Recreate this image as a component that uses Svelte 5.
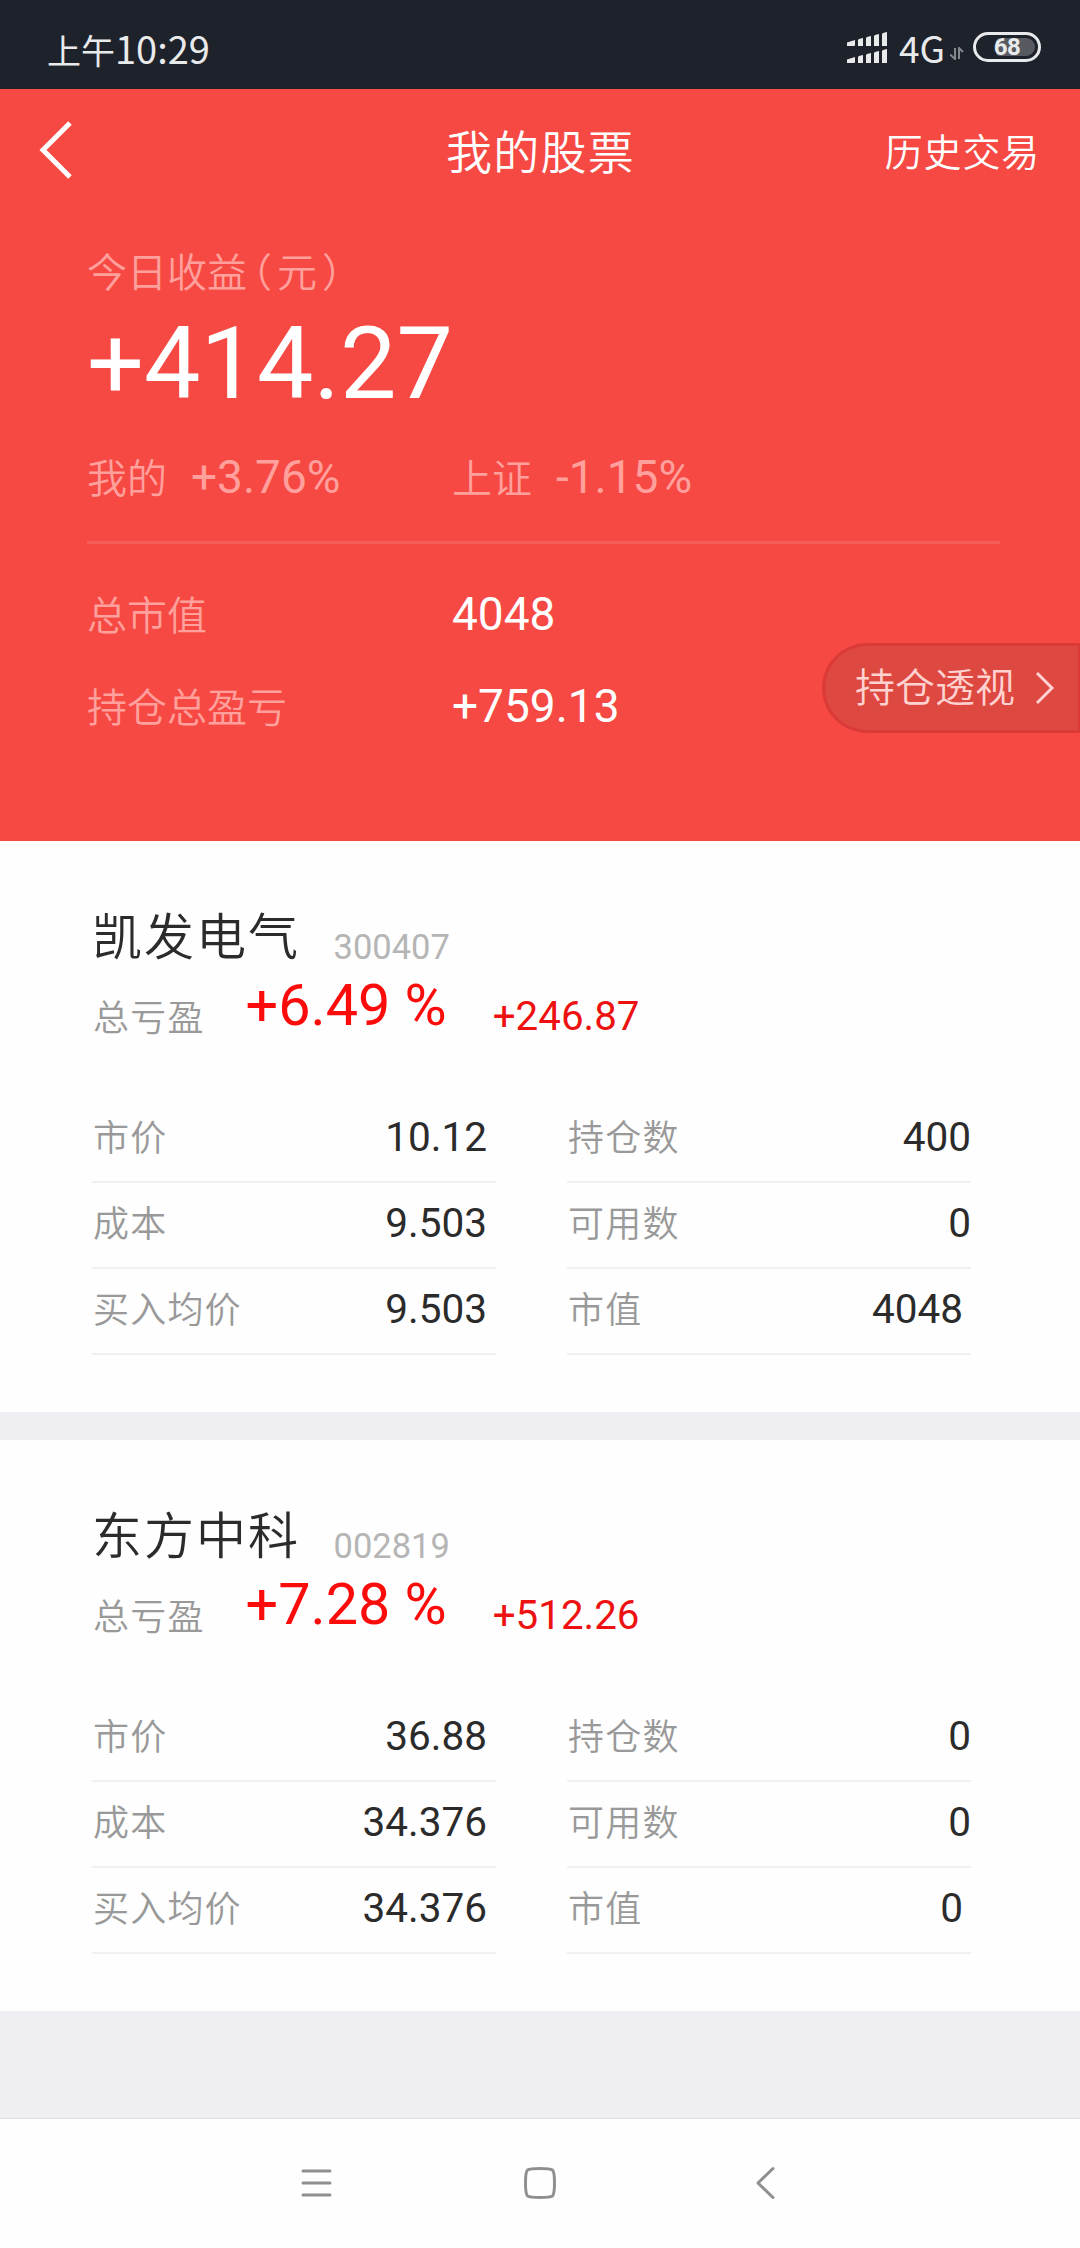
<script lang="ts">
    interface Field {
        label: string;
        value: string;
        inset?: boolean;
    }

    interface Stock {
        name: string;
        code: string;
        percent: string;
        profit: string;
        left: Field[];
        right: Field[];
    }

    const stocks: Stock[] = [
        {
            name: "凯发电气",
            code: "300407",
            percent: "+6.49 %",
            profit: "+246.87",
            left: [
                { label: "市价", value: "10.12" },
                { label: "成本", value: "9.503" },
                { label: "买入均价", value: "9.503" },
            ],
            right: [
                { label: "持仓数", value: "400" },
                { label: "可用数", value: "0" },
                { label: "市值", value: "4048", inset: true },
            ],
        },
        {
            name: "东方中科",
            code: "002819",
            percent: "+7.28 %",
            profit: "+512.26",
            left: [
                { label: "市价", value: "36.88" },
                { label: "成本", value: "34.376" },
                { label: "买入均价", value: "34.376" },
            ],
            right: [
                { label: "持仓数", value: "0" },
                { label: "可用数", value: "0" },
                { label: "市值", value: "0", inset: true },
            ],
        },
    ];
</script>

<div class="screen">
    <div class="status-bar">
        <div class="clock"><span class="period">上午</span>10:29</div>
        <div class="status-icons">
            <svg class="signal" viewBox="0 0 42 32" width="42" height="32">
                <path
                    d="M1 11.5L9 9v5q0 1-1 1H1zM12 9q0-1 5-2v8h-5zM20 7q0-1 5-2v10h-5zM28 5q0-1 5-2v12h-5zM36 3q0-1 5-2v14h-5zM1 28.500L9 26v5q0 1-1 1H1zM12 26q0-1 5-2v8h-5zM20 24q0-1 5-2v10h-5zM28 22q0-1 5-2v12h-5zM36 20q0-1 5-2v14h-5z"
                />
            </svg>
            <span class="network">4G</span>
            <svg class="data" viewBox="0 0 14 13" width="14" height="13">
                <path d="M5 1v11L0 7.500M9 12V1l4 4" />
            </svg>
            <div class="battery">
                <div class="level"></div>
                <span>68</span>
            </div>
        </div>
    </div>

    <section class="hero">
        <header class="title-bar">
            <button class="back" aria-label="返回">
                <svg viewBox="0 0 36 60" width="36" height="60">
                    <path d="M32 3L5 30l27 27" />
                </svg>
            </button>
            <h1>我的股票</h1>
            <button class="history">历史交易</button>
        </header>

        <div class="hero-body">
            <div class="muted">
                今日收益<span class="paren open">（</span>元<span
                    class="paren close">）</span
                >
            </div>
            <div class="amount">+414.27</div>
            <div class="indices">
                <div class="index">
                    <span class="muted">我的</span>
                    <span class="rate">+3.76%</span>
                </div>
                <div class="index">
                    <span class="muted">上证</span>
                    <span class="rate">-1.15%</span>
                </div>
            </div>
            <div class="totals">
                <div class="total-list">
                    <span class="muted">总市值</span>
                    <span class="total">4048</span>
                    <span class="muted">持仓总盈亏</span>
                    <span class="total">+759.13</span>
                </div>
                <button class="insight">
                    <span>持仓透视</span>
                    <svg viewBox="0 0 20 34" width="20" height="34">
                        <path d="M2 2l15 15L2 32" />
                    </svg>
                </button>
            </div>
        </div>
    </section>

    <main>
        {#each stocks as stock}
            <article class="card">
                <div class="heading">
                    <h2>{stock.name}</h2>
                    <span class="code">{stock.code}</span>
                </div>
                <div class="summary">
                    <span class="label">总亏盈</span>
                    <span class="percent">{stock.percent}</span>
                    <span class="profit">{stock.profit}</span>
                </div>
                <div class="fields">
                    {#each [stock.left, stock.right] as column}
                        <div class="column">
                            {#each column as field}
                                <div class="field" class:inset={field.inset}>
                                    <span class="label">{field.label}</span>
                                    <span class="value">{field.value}</span>
                                </div>
                            {/each}
                        </div>
                    {/each}
                </div>
            </article>
        {/each}
    </main>

    <nav>
        <svg viewBox="0 0 36 36" width="36" height="36">
            <path d="M5 6h27M5 18h27M5 30h27" />
        </svg>
        <svg viewBox="0 0 36 36" width="36" height="36">
            <path
                d="M18 3.500Q28 3.500 30.500 5Q32.500 7 32.500 18T30.500 31Q28 32.500 18 32.500T5.500 31Q3.500 29 3.500 18T5.500 5Q8 3.500 18 3.500z"
            />
        </svg>
        <svg viewBox="0 0 36 36" width="36" height="36">
            <path d="M27 3.500L12 18l15 14.500" />
        </svg>
    </nav>
</div>

<style>
    :global(body) {
        margin: 0;
        background: #efeef3;
    }

    .screen {
        display: flex;
        flex-direction: column;
        width: 1080px;
        height: 2248px;
        overflow: hidden;
        font-family: Roboto, "Noto Sans CJK SC", sans-serif;
        line-height: 1;
        background: #efeef3;
    }

    svg {
        display: block;
        fill: none;
        flex: none;
    }

    button {
        padding: 0;
        border: none;
        background: none;
        color: inherit;
        font: inherit;
    }

    h1,
    h2 {
        margin: 0;
        font-weight: 350;
    }

    .status-bar {
        display: flex;
        justify-content: space-between;
        align-items: center;
        box-sizing: border-box;
        height: 89px;
        padding: 5px 39px 0 47px;
        background: #1e222b;
        color: #e9eaeb;
        font-family: "Noto Sans CJK SC", sans-serif;
    }

    .clock {
        padding-top: 1px;
        font-size: 38px;
    }

    .period {
        font-size: 34px;
    }

    .status-icons {
        display: flex;
        align-items: center;
    }

    .signal {
        fill: #e9eaeb;
    }

    .network {
        margin-left: 11px;
        font-size: 37px;
    }

    .data {
        margin: 13px 9px 0 5px;
        stroke: #85888e;
        stroke-width: 2;
    }

    .battery {
        display: grid;
        place-items: center;
        box-sizing: border-box;
        width: 68px;
        height: 30px;
        border: 3px solid #e9eaeb;
        border-radius: 15px;
        font-family: Roboto, sans-serif;
        font-size: 24px;
        font-weight: 700;
        letter-spacing: -0.5px;
    }

    .battery > * {
        grid-area: 1 / 1;
    }

    .level {
        justify-self: end;
        width: 39px;
        height: 18px;
        margin-right: 3px;
        border-radius: 4px 9px 9px 4px;
        background: #575a61;
    }

    .hero {
        height: 752px;
        background: #f64944;
        color: #fff;
    }

    .title-bar {
        display: grid;
        grid-template-columns: 1fr auto 1fr;
        align-items: center;
        height: 128px;
        padding: 0 40px 0 38px;
    }

    .back {
        justify-self: start;
        margin-bottom: 7px;
        stroke: #fff;
        stroke-width: 5;
    }

    h1 {
        padding-left: 3px;
        font-size: 46px;
        letter-spacing: 1.2px;
    }

    .history {
        justify-self: end;
        font-size: 38px;
        font-weight: 350;
        letter-spacing: 0.8px;
    }

    .hero-body {
        padding: 37px 80px 0 87px;
    }

    .muted {
        font-size: 40px;
        font-weight: 350;
        color: #ffa09c;
    }

    .paren {
        font-feature-settings: "halt";
    }

    .open {
        margin: 0 5px;
    }

    .close {
        margin-left: 5px;
    }

    .amount {
        margin-top: 20px;
        font-size: 100.5px;
        line-height: 101px;
    }

    .indices {
        display: grid;
        grid-template-columns: 365px 1fr;
        margin-top: 39px;
        padding-bottom: 41px;
        border-bottom: 3px solid #f65c58;
    }

    .index {
        display: flex;
        align-items: baseline;
        gap: 24px;
    }

    .rate {
        font-size: 46px;
        color: #ffa09c;
    }

    .totals {
        display: flex;
        justify-content: space-between;
        margin-right: -80px;
    }

    .total-list {
        display: grid;
        grid-template-columns: 365px auto;
        grid-auto-rows: 46px;
        row-gap: 46px;
        align-items: baseline;
        padding-top: 47px;
    }

    .total {
        font-size: 46px;
    }

    .insight {
        display: flex;
        align-items: center;
        justify-content: space-between;
        box-sizing: border-box;
        width: 258px;
        height: 90px;
        margin-top: 99px;
        padding: 0 23px 0 30px;
        border: 3px solid #db3a38;
        border-right-width: 2px;
        border-radius: 45px 0 0 45px;
        background: #dd4840;
        color: #ffd2d0;
        font-size: 40px;
        font-weight: 350;
        stroke-width: 3;
    }

    .insight span {
        padding-top: 1px;
    }

    .insight svg {
        stroke: #ffd2d0;
    }

    main {
        display: flex;
        flex-direction: column;
        flex: 1;
        gap: 28px;
    }

    .card {
        box-sizing: border-box;
        height: 571px;
        padding: 72px 109px 0 92px;
        background: #fefefe;
        color: #2b2b2b;
    }

    .heading {
        display: flex;
        align-items: flex-end;
        gap: 33.5px;
    }

    h2 {
        font-size: 50px;
        letter-spacing: 2px;
    }

    .code {
        font-size: 34.5px;
        line-height: 31px;
        color: #b5b5b5;
    }

    .summary {
        display: flex;
        align-items: flex-end;
        margin-top: 12px;
    }

    .label {
        padding-left: 1px;
        font-size: 36px;
        font-weight: 350;
        letter-spacing: 1.2px;
        color: #999;
    }

    .percent {
        margin: 0 46px 0 41px;
        font-size: 57.5px;
        line-height: 62px;
        color: #fc0b0b;
    }

    .profit {
        font-size: 40.3px;
        color: #ee1111;
    }

    .fields {
        display: grid;
        grid-template-columns: 1fr 1fr;
        gap: 71px;
        margin-top: 60px;
    }

    .field {
        display: flex;
        align-items: baseline;
        justify-content: space-between;
        box-sizing: border-box;
        height: 86px;
        padding-top: 20px;
        border-bottom: 2px solid #f0f0f0;
    }

    .value {
        font-size: 40.5px;
    }

    .column:first-child .value {
        padding-right: 9px;
    }

    .inset .value {
        padding-right: 8px;
    }

    nav {
        display: flex;
        justify-content: space-between;
        box-sizing: border-box;
        height: 130px;
        padding: 46px 298px 0 298px;
        border-top: 1px solid #dddde0;
        background: #fefefe;
        stroke: #8f8f8f;
        stroke-width: 3;
        stroke-linecap: round;
        stroke-linejoin: round;
    }
</style>
